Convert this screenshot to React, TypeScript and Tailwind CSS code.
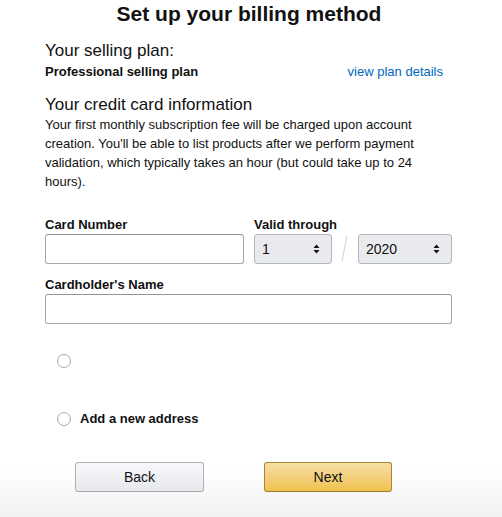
import React from "react"

// ─── Small drawings ────────────────────────────────────────────────────────────

function UpDown() {
  return (
    <svg width="7" height="10" viewBox="0 0 7 10" className="shrink-0">
      <path d="M3.5 0.5 L6.5 4 L0.5 4 Z" fill="#111" />
      <path d="M3.5 9.5 L6.5 6 L0.5 6 Z" fill="#111" />
    </svg>
  )
}

function FakeSelect({ value, width }: { value: string; width: string }) {
  return (
    <div
      className={`${width} flex h-[30px] items-center justify-between rounded-[3px] border border-[#b5b8bd] bg-[#e9eaed] pl-[7px] pr-[11px] text-[14px] text-[#111]`}
    >
      <span>{value}</span>
      <UpDown />
    </div>
  )
}

function Radio() {
  return <span className="block h-[14px] w-[14px] shrink-0 rounded-full border border-[#a9a9a9] bg-white" />
}

// ─── Page ──────────────────────────────────────────────────────────────────────

export default function App() {
  return (
    <div className="flex h-[517px] w-[502px] flex-col bg-white font-['Liberation_Sans',Arial,sans-serif] text-[#111]">
      <h1 className="pr-[4px] text-center text-[21px] font-bold leading-[28px]">Set up your billing method</h1>

      <div className="pl-[45px] w-[452px]">
        {/* Selling plan */}
        <h2 className="mt-[13px] text-[17px] leading-[20px]">Your selling plan:</h2>
        <div className="mt-[1px] flex items-center justify-between pr-[9px] text-[13px] leading-[19px]">
          <span className="font-bold">Professional selling plan</span>
          <a href="#" className="text-[#0066c0]">
            view plan details
          </a>
        </div>

        {/* Credit card */}
        <h2 className="mt-[14px] text-[17px] leading-[20px]">Your credit card information</h2>
        <p className="w-[400px] text-[13px] leading-[19px]">
          Your first monthly subscription fee will be charged upon account creation. You'll be able to list
          products after we perform payment validation, which typically takes an hour (but could take up to 24
          hours).
        </p>

        <div className="mt-[24px] flex">
          <div className="flex w-[199px] flex-col">
            <label className="text-[13px] font-bold leading-[19px]">Card Number</label>
            <div className="h-[30px] rounded-[3px] border border-[#a6a6a6] border-t-[#949494] bg-white" />
          </div>
          <div className="ml-[10px] flex flex-col">
            <label className="text-[13px] font-bold leading-[19px]">Valid through</label>
            <div className="flex items-center">
              <FakeSelect value="1" width="w-[78px]" />
              <svg width="26" height="30" viewBox="0 0 26 30" className="shrink-0">
                <line x1="15" y1="2" x2="10" y2="27" stroke="#cfcfcf" strokeWidth="1" />
              </svg>
              <FakeSelect value="2020" width="w-[94px]" />
            </div>
          </div>
        </div>

        <label className="mt-[11px] block text-[13px] font-bold leading-[19px]">Cardholder's Name</label>
        <div className="h-[30px] w-[407px] rounded-[3px] border border-[#a6a6a6] border-t-[#949494] bg-white" />

        {/* Address choice */}
        <div className="mt-[30px] flex items-center pl-[12px]">
          <Radio />
        </div>
        <div className="mt-[41px] flex items-center gap-[9px] pl-[12px]">
          <Radio />
          <span className="text-[13px] font-bold leading-[19px]">Add a new address</span>
        </div>
      </div>

      {/* Buttons */}
      <div className="mt-auto flex h-[78px] items-start gap-[60px] bg-gradient-to-b from-white from-40% to-[#f1f1f1] pl-[75px] pt-[23px]">
        <button className="h-[30px] w-[129px] rounded-[3px] border border-[#adb1b8] border-b-[#a2a6ac] bg-gradient-to-b from-[#f7f8fa] to-[#e7e9ec] text-[14px] text-[#111]">
          Back
        </button>
        <button className="h-[30px] w-[128px] rounded-[3px] border border-[#a88734] border-b-[#9c7e31] bg-gradient-to-b from-[#f7dfa5] to-[#f0c14b] text-[14px] text-[#111]">
          Next
        </button>
      </div>
    </div>
  )
}
